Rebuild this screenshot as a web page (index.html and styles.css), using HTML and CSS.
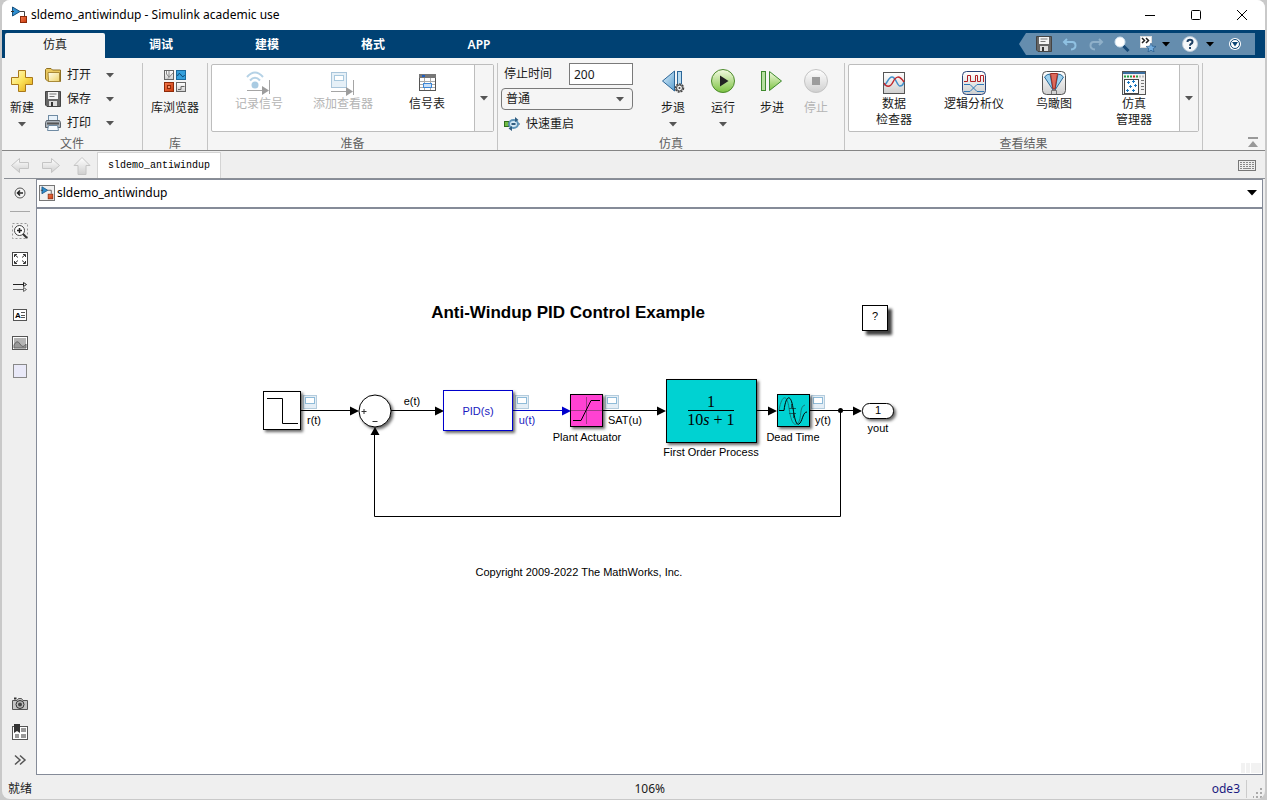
FILE: index.html
```html
<!DOCTYPE html>
<html lang="zh-CN">
<head>
<meta charset="utf-8">
<title>sldemo_antiwindup - Simulink academic use</title>
<link rel="stylesheet" href="styles.css">
</head>
<body>
<svg class="defs" aria-hidden="true">
  <defs>
    <linearGradient id="gold" x1="0" y1="0" x2="1" y2="1"><stop offset="0" stop-color="#fffbd0"/><stop offset=".5" stop-color="#fbe25a"/><stop offset="1" stop-color="#e0a010"/></linearGradient>
    <linearGradient id="folder" x1="0" y1="0" x2="1" y2="1"><stop offset="0" stop-color="#fffef0"/><stop offset="1" stop-color="#eed36a"/></linearGradient>
    <linearGradient id="blue" x1="0" y1="0" x2="1" y2="1"><stop offset="0" stop-color="#dff1fc"/><stop offset="1" stop-color="#5a9fd0"/></linearGradient>
    <linearGradient id="green" x1="0" y1="0" x2="0" y2="1"><stop offset="0" stop-color="#f4fbe2"/><stop offset="1" stop-color="#7cc242"/></linearGradient>
    <linearGradient id="grey" x1="0" y1="0" x2="0" y2="1"><stop offset="0" stop-color="#ffffff"/><stop offset="1" stop-color="#cfcfcf"/></linearGradient>
    <linearGradient id="red" x1="0" y1="0" x2="1" y2="1"><stop offset="0" stop-color="#f47a50"/><stop offset="1" stop-color="#c8380a"/></linearGradient>
    <symbol id="model" viewBox="0 0 18 18"><path d="M10 5.500H14.500V10" fill="none" stroke="#444"/><path d="M2.500 1L10 5.500L2.500 10Z" fill="#2f8fd0" stroke="#16507e"/><path d="M1 5.500H4" stroke="#333"/><rect x="10.500" y="10.500" width="6" height="6" fill="url(#red)" stroke="#8c2a08"/></symbol>
    <symbol id="down" viewBox="0 0 8 5"><path d="M0 0H8L4 4.500Z" fill="currentColor"/></symbol>
    <symbol id="disk" viewBox="0 0 16 16"><path d="M.5 .5H15.500V15.500H2L.5 14Z" fill="#666" stroke="#444"/><rect x="3" y="1" width="10" height="7" fill="#f4f4f4"/><path d="M4.500 3H11.500M4.500 5.500H9.500" stroke="#777"/><rect x="4" y="10" width="8" height="5" fill="#ddd"/><rect x="6" y="11" width="2" height="4" fill="#333"/></symbol>
  </defs>
</svg>
<div class="window">
  <header class="titlebar">
    <svg class="i18" aria-hidden="true"><use href="#model"/></svg>
    <h1 class="title">sldemo_antiwindup - Simulink academic use</h1>
    <button class="winbtn" aria-label="最小化"><svg width="12" height="12"><path d="M1 6.500H11" stroke="#000"/></svg></button>
    <button class="winbtn" aria-label="最大化"><svg width="12" height="12"><rect x="1.500" y="1.500" width="9" height="9" rx="1" fill="none" stroke="#000"/></svg></button>
    <button class="winbtn" aria-label="关闭"><svg width="12" height="12"><path d="M1 1L11 11M11 1L1 11" stroke="#000"/></svg></button>
  </header>

  <nav class="tabs">
    <button class="tab active">仿真</button>
    <button class="tab">调试</button>
    <button class="tab">建模</button>
    <button class="tab">格式</button>
    <button class="tab">APP</button>
    <div class="quick">
      <button class="q" aria-label="保存"><svg class="i16"><use href="#disk"/></svg></button>
      <button class="q" aria-label="撤销"><svg class="i16"><path d="M5 3L2 6L5 9M2.500 6H10.500Q13.500 6 13.500 9.500Q13.500 13 9 13.500" fill="none" stroke="#8fc1e2" stroke-width="2"/></svg></button>
      <button class="q" aria-label="重做"><svg class="i16"><path d="M11 3L14 6L11 9M13.500 6H5.500Q2.500 6 2.500 9.500Q2.500 13 7 13.500" fill="none" stroke="#8fb0c9" stroke-width="2"/></svg></button>
      <button class="q" aria-label="搜索"><svg class="i16"><path d="M9 9.500L14.500 15" stroke="#174a78" stroke-width="3"/><circle cx="6" cy="6" r="5" fill="#fff" stroke="#cfe2f0"/></svg></button>
      <button class="q" aria-label="收藏夹"><svg class="i16"><rect x=".5" y=".5" width="11" height="11" fill="#fff" stroke="#ddd"/><path d="M2 2L4.500 4.500L2 7M6 2L8.500 4.500L6 7" fill="none" stroke="#222" stroke-width="1.500"/><path d="M11 7L12.300 10.200L16 10.500L13.200 12.600L14 16L11 14.200L8 16L8.800 12.600L6 10.500L9.700 10.200Z" fill="#74aee0" stroke="#1d4f80" stroke-width=".6"/></svg></button>
      <button class="qa" aria-label="收藏夹菜单"><svg class="dn"><use href="#down"/></svg></button>
      <button class="q qh" aria-label="帮助"><svg class="i16" viewBox="0 0 16 16"><circle cx="8" cy="8" r="7.500" fill="#f4f7fa" stroke="#b9c8d6"/><path d="M5.500 6Q5.500 3.800 8 3.800Q10.500 3.800 10.500 6Q10.500 7.200 8.800 8Q8 8.500 8 9.700M8 11V13" fill="none" stroke="#1d3f63" stroke-width="2"/></svg></button>
      <button class="qa" aria-label="帮助菜单"><svg class="dn"><use href="#down"/></svg></button>
      <button class="q ql" aria-label="工具栏选项"><svg class="i16"><circle cx="8" cy="8" r="6" fill="#fff"/><circle cx="8" cy="8" r="4.500" fill="#fff" stroke="#0d4675"/><path d="M5 6H11L8 10.500Z" fill="#0d4675"/></svg></button>
    </div>
  </nav>

  <section class="ribbon">
    <div class="group g-file">
      <div class="body">
        <button class="big w40"><svg class="i26"><path d="M9.500 2.500H16.500V9.500H23.500V16.500H16.500V23.500H9.500V16.500H2.500V9.500H9.500Z" fill="url(#gold)" stroke="#a9781a"/></svg><span>新建</span><svg class="dn"><use href="#down"/></svg></button>
        <div class="rows">
          <div class="row"><button class="small"><svg class="i16"><path d="M.5 2.500L1.500 1.500H6L7.500 3H15.500V14.500H3L.5 12Z" fill="#e9c860" stroke="#8e6f22"/><path d="M3 5.500H14.500V14.500H3.500Z" fill="url(#folder)" stroke="#a98a38"/></svg>打开</button><button class="drop" aria-label="打开菜单"><svg class="dn"><use href="#down"/></svg></button></div>
          <div class="row"><button class="small"><svg class="i16"><use href="#disk"/></svg>保存</button><button class="drop" aria-label="保存菜单"><svg class="dn"><use href="#down"/></svg></button></div>
          <div class="row"><button class="small"><svg class="i16"><rect x="3.500" y=".5" width="9" height="6" fill="#e8f2fa" stroke="#6f8ba3"/><path d="M1.500 5.500H14.500L15.500 7.500V12.500H.5V7.500Z" fill="#aab2ba" stroke="#5b636b"/><path d="M2 8.500H14" stroke="#555" stroke-width="2"/><path d="M3.500 10.500H12.500L13.500 15.500H2.500Z" fill="#f6fbff" stroke="#6f8ba3"/></svg>打印</button><button class="drop" aria-label="打印菜单"><svg class="dn"><use href="#down"/></svg></button></div>
        </div>
      </div>
      <div class="glabel">文件</div>
    </div>

    <div class="group g-lib">
      <div class="body mid">
        <button class="big"><svg class="i26"><rect x="2.500" y="2.500" width="9" height="9" fill="url(#grey)" stroke="#666"/><path d="M4.500 3V6L7 9V3M6 10.500L11 5" stroke="#888" fill="none"/><rect x="14.500" y="2.500" width="9" height="9" fill="#35a0dc" stroke="#1a6a9e"/><path d="M15.500 8Q17 3.500 19 7T22.500 7" fill="none" stroke="#0d4a75"/><rect x="2.500" y="14.500" width="9" height="9" fill="url(#red)" stroke="#8e2a08"/><rect x="5.500" y="17.500" width="3" height="3" fill="#f39470" stroke="#8e2a08"/><rect x="14.500" y="14.500" width="9" height="9" fill="url(#grey)" stroke="#666"/><path d="M16 21.500H19V18.500H22.500" fill="none" stroke="#666"/></svg><span>库浏览器</span></button>
      </div>
      <div class="glabel">库</div>
    </div>

    <div class="group g-prep">
      <div class="body">
        <div class="gallery">
          <button class="item w84" disabled><svg class="i26"><g fill="none" stroke="#b5d2e6" stroke-width="2"><path d="M1 7Q9-2 17 7M4 10.500Q9 5 14 10.500"/></g><circle cx="9" cy="15" r="3.500" fill="#a9cbe2"/><path d="M1 20.500H18M23.500 10V24" stroke="#a5a5a5"/><path d="M16 16L23 20.500L16 25Z" fill="#9d9d9d"/></svg><span>记录信号</span></button>
          <button class="item w84" disabled><svg class="i26"><rect x="1.500" y="2.500" width="15" height="15" fill="#e6f0f7" stroke="#a9c5da"/><rect x="4.500" y="5.500" width="9" height="5" fill="#fff" stroke="#a9c9de"/><path d="M1 21.500H18M23.500 10V25" stroke="#a5a5a5"/><path d="M16 17L23 21.500L16 26Z" fill="#9d9d9d"/></svg><span>添加查看器</span></button>
          <button class="item w84"><svg class="i26"><rect x="5.500" y="4.500" width="16" height="16" fill="#fff" stroke="#555"/><rect x="5" y="4" width="17" height="4" fill="#777"/><rect x="8" y="5" width="3" height="2" fill="#1e5fc0"/><path d="M6 11.500H21M6 14.500H21M6 17.500H21M10.500 8V20M16.500 8V20" stroke="#aaa"/><rect x="9.500" y="13.500" width="8" height="4" fill="#c9e0f8" stroke="#3c87d8"/></svg><span>信号表</span></button>
          <button class="more" aria-label="更多准备工具"><svg class="dn"><use href="#down"/></svg></button>
        </div>
      </div>
      <div class="glabel">准备</div>
    </div>

    <div class="group g-sim">
      <div class="body">
        <div class="simcol">
          <div class="stoprow"><label for="stop">停止时间</label><input id="stop" type="text" value="200"></div>
          <div class="selwrap"><select aria-label="仿真模式"><option>普通</option></select><svg class="dn"><use href="#down"/></svg></div>
          <button class="small fast"><svg class="i16"><rect x=".5" y="5.500" width="4" height="5" fill="#72bb45" stroke="#2f6e1d"/><path d="M13 8H16" stroke="#357"/><ellipse cx="9.500" cy="8" rx="4.500" ry="4" fill="#d5e8f4" stroke="#5d93b8" stroke-width="2"/><path d="M11 1L14.500 4L11 6ZM8 10L4.500 12.500L8 15Z" fill="#315d80"/><path d="M7.500 8H11.500" stroke="#315d80" stroke-width="2"/></svg>快速重启</button>
        </div>
        <div class="runs">
          <button class="big w50"><svg class="i26"><path d="M2.500 13L14.500 3V23Z" fill="url(#blue)" stroke="#2c6698"/><rect x="17.500" y="3.500" width="4" height="17" fill="#b9dcf1" stroke="#2c6698"/><circle cx="19.500" cy="20" r="4" fill="#ddd" stroke="#444" stroke-width="1.500" stroke-dasharray="2 1"/><circle cx="19.500" cy="20" r="3" fill="#eee" stroke="#444"/><circle cx="19.500" cy="20" r="1" fill="#444"/></svg><span>步退</span><svg class="dn"><use href="#down"/></svg></button>
          <button class="big w50"><svg class="i26"><circle cx="13" cy="13" r="11.500" fill="url(#green)" stroke="#4c8a2c"/><path d="M10 7.500L18.500 13L10 18.500Z" fill="#222"/></svg><span>运行</span><svg class="dn"><use href="#down"/></svg></button>
          <button class="big w48"><svg class="i26"><rect x="2.500" y="3.500" width="4" height="19" fill="#b5dfa0" stroke="#3e8a2e"/><path d="M10.500 3.500V22.500L22.500 13Z" fill="url(#green)" stroke="#3e8a2e"/></svg><span>步进</span></button>
          <button class="big w40" disabled><svg class="i26"><circle cx="13" cy="13" r="11.500" fill="url(#grey)" stroke="#c4c4c4"/><rect x="9" y="9" width="8" height="8" fill="#9c9c9c"/></svg><span>停止</span></button>
        </div>
      </div>
      <div class="glabel">仿真</div>
    </div>

    <div class="group g-rev">
      <div class="body">
        <div class="gallery">
          <button class="item w80"><svg class="i26"><rect x="2.500" y="2.500" width="21" height="21" fill="url(#grey)" stroke="#555"/><path d="M3 15C6 15 7 7 11 7S16 16 19 16S22 14 23 12" fill="none" stroke="#3f8fca" stroke-width="1.500"/><path d="M3 13C5 17 9 18 12 12S18 5 23 12" fill="none" stroke="#c1272d" stroke-width="1.500"/></svg><span>数据<br>检查器</span></button>
          <button class="item w80"><svg class="i26"><rect x="1.500" y="1.500" width="23" height="23" rx="4" fill="url(#grey)" stroke="#2a4478"/><path d="M3 11.500H6.500V5.500H9.500V11.500H14.500V5.500H16.500V11.500H19.500V5.500H22.500V12" fill="none" stroke="#b01e24"/><path d="M3 14.500H9L16 21.500H23M3 21.500H9L16 14.500H23" fill="none" stroke="#2d78b8"/></svg><span>逻辑分析仪</span></button>
          <button class="item w80"><svg class="i26"><rect x="1.500" y="1.500" width="23" height="23" rx="4" fill="url(#grey)" stroke="#555"/><path d="M3.500 7Q6 4 9 4L12 20Z" fill="#9fd2f0" stroke="#2a6a98"/><path d="M22.500 7Q20 4 17 4L14 20Z" fill="#9fd2f0" stroke="#2a6a98"/><path d="M9.500 3.500H16.500L14 19H12Z" fill="#dd6a5c" stroke="#9c2a22"/><path d="M10.500 24V20.500H15.500V24" fill="none" stroke="#777"/></svg><span>鸟瞰图</span></button>
          <button class="item w80"><svg class="i26"><rect x="1.500" y="1.500" width="23" height="23" fill="#f2f2f2" stroke="#555"/><rect x="2" y="2" width="22" height="2" fill="#3a6fa0"/><path d="M3 6.500H12M15 6.500H18" stroke="#22a040" stroke-width="2" stroke-dasharray="2 1"/><path d="M12 6.500H14" stroke="#d02020" stroke-width="2"/><path d="M18 6.500H23" stroke="#bbb" stroke-width="2" stroke-dasharray="2 1"/><rect x="3.500" y="9.500" width="14" height="14" fill="#fff" stroke="#444"/><path d="M7.500 11V14M6 12.500H9M12.500 10V13M11 11.500H14M9.500 15V18M8 16.500H11M14.500 14V17M13 15.500H16M6.500 19V22M5 20.500H8M12.500 19V22M11 20.500H14" stroke="#1c78c0"/><path d="M20 10.500H23M20 13.500H23M20 16.500H23M20 19.500H23" stroke="#777"/></svg><span>仿真<br>管理器</span></button>
          <button class="more" aria-label="更多结果工具"><svg class="dn"><use href="#down"/></svg></button>
        </div>
      </div>
      <div class="glabel">查看结果</div>
    </div>
    <button class="collapse" aria-label="折叠工具栏"><svg width="12" height="12"><path d="M1 2H11" stroke="#999" stroke-width="2"/><path d="M6 5L11 11H1Z" fill="#999"/></svg></button>
  </section>

  <div class="docbar">
    <button class="nav" aria-label="后退"><svg width="20" height="18"><path d="M1.500 8.500L9.500 1.500V5.500H18.500V11.500H9.500V15.500Z" fill="url(#grey)" stroke="#c4c4c4"/></svg></button>
    <button class="nav" aria-label="前进"><svg width="20" height="18"><path d="M18.500 8.500L10.500 1.500V5.500H1.500V11.500H10.500V15.500Z" fill="url(#grey)" stroke="#c4c4c4"/></svg></button>
    <button class="nav" aria-label="向上"><svg width="20" height="18"><path d="M10 .5L18 8.500H14V17.500H6V8.500H2Z" fill="url(#grey)" stroke="#c4c4c4"/></svg></button>
    <button class="doctab">sldemo_antiwindup</button>
    <button class="kbd" aria-label="键盘"><svg width="18" height="11"><rect x=".5" y=".5" width="17" height="10" fill="#eee" stroke="#777"/><path d="M2 2.500H16M2 4.500H16M2 6.500H16" stroke="#888" stroke-dasharray="2 1"/><path d="M2 8.500H4M5 8.500H13M14 8.500H16" stroke="#888"/></svg></button>
  </div>

  <div class="work">
    <aside class="rail">
      <button class="tool" aria-label="隐藏浏览器"><svg class="i16"><circle cx="8" cy="8" r="5" fill="#f4f4f4" stroke="#555"/><path d="M11 8H6M8 5.500L5.500 8L8 10.500" fill="none" stroke="#222" stroke-width="1.500"/></svg></button>
      <hr class="sep">
      <button class="tool" aria-label="缩放"><svg class="i16"><rect x=".5" y=".5" width="15" height="15" fill="none" stroke="#999" stroke-dasharray="2 2"/><path d="M11 11L15 15" stroke="#333" stroke-width="2"/><circle cx="7.500" cy="7.500" r="5" fill="#fff" stroke="#444"/><path d="M5 7.500H10M7.500 5V10" stroke="#222" stroke-width="1.500"/></svg></button>
      <button class="tool" aria-label="适应视图"><svg class="i16"><rect x=".5" y="1.500" width="15" height="13" fill="#fff" stroke="#444"/><path d="M2.500 6V3.500H5M3 4L6 6.500M11 3.500H13.500V6M13 4L10 6.500M2.500 10V12.500H5M3 12L6 9.500M11 12.500H13.500V10M13 12L10 9.500" fill="none" stroke="#333"/></svg></button>
      <button class="tool" aria-label="采样时间"><svg class="i16"><path d="M1 5.500H12M11.500 3.500L14.500 5.500L11.500 7.500Z" fill="none" stroke="#222"/><path d="M1 10.500H12M11.500 8.500L14.500 10.500L11.500 12.500Z" fill="none" stroke="#666"/></svg></button>
      <button class="tool" aria-label="注释"><svg class="i16" viewBox="0 0 16 16"><rect x="1.500" y="2.500" width="13" height="11" fill="#fff" stroke="#555"/><text class="a" x="3" y="11">A</text><path d="M9 5.500H13M9 8.500H13M9 10.500H13" stroke="#555"/></svg></button>
      <button class="tool" aria-label="图像"><svg class="i16"><rect x=".5" y="1.500" width="15" height="13" fill="#fff" stroke="#555"/><rect x="2" y="3" width="12" height="10" fill="#b4b4b4"/><path d="M2 10Q5 4 8 9T14 9V13H2Z" fill="#999" stroke="#666"/></svg></button>
      <button class="tool" aria-label="区域"><svg class="i16"><rect x="1.500" y="1.500" width="13" height="13" fill="#e9e9f8" stroke="#888"/></svg></button>
      <button class="tool bottom" aria-label="截图"><svg class="i16"><path d="M.5 4.500H5L6.500 2.500H9.500L11 4.500H15.500V13.500H.5Z" fill="#c6c6c6" stroke="#555"/><path d="M2 2.500H4.500" stroke="#333" stroke-width="2"/><circle cx="8" cy="8.500" r="4" fill="#bbb" stroke="#333"/><circle cx="8" cy="8.500" r="2" fill="#444"/></svg></button>
      <button class="tool" aria-label="书签"><svg class="i16"><rect x=".5" y="2.500" width="15" height="13" fill="#fff" stroke="#555"/><path d="M2 0H8V9L5 7L2 9Z" fill="#333"/><path d="M9 4H14V8H9ZM9 10H14V14H9ZM3 10H7V14H3Z" fill="#999"/></svg></button>
      <button class="tool" aria-label="更多"><svg class="i16"><path d="M3 3.500L8 8L3 12.500M8 3.500L13 8L8 12.500" fill="none" stroke="#555" stroke-width="1.500"/></svg></button>
    </aside>
    <main class="editor">
      <div class="pathbar">
        <span class="pathicon"><svg width="14" height="14" aria-hidden="true"><use href="#model"/></svg></span>
        <a class="pathlink" href="#">sldemo_antiwindup</a>
        <button class="pathdrop" aria-label="路径历史"><svg width="10" height="6"><path d="M0 0H10L5 5.500Z" fill="#000"/></svg></button>
      </div>
      <div class="canvas">
        <svg class="diagram" width="640" height="290" viewBox="260 295 640 290" role="img" aria-label="Anti-Windup PID Control Example">
          <defs>
            <filter id="sh" x="-20%" y="-20%" width="150%" height="160%"><feDropShadow dx="2" dy="2" stdDeviation="1.500" flood-color="#000" flood-opacity=".6"/></filter>
            <filter id="sh2" x="-20%" y="-20%" width="160%" height="160%"><feDropShadow dx="4" dy="4" stdDeviation="1.500" flood-color="#000" flood-opacity=".75"/></filter>
            <g id="scope"><rect x=".5" y=".5" width="13" height="13" fill="#e4eef6" stroke="#b4ccdd"/><rect x="2.500" y="2.500" width="9" height="6" fill="#fff" stroke="#8fbbd8"/></g>
            <path id="head" d="M0-4.500L9 0L0 4.500Z"/>
          </defs>
          <text class="heading" x="568" y="318">Anti-Windup PID Control Example</text>
          <rect x="862.500" y="305.500" width="25" height="25" fill="#fff" stroke="#000" filter="url(#sh2)"/>
          <text class="mid" x="875" y="320">?</text>

          <g fill="none" stroke="#000">
            <path d="M301 410.500H352M391 410.500H437M603 410.500H660M756 410.500H771M809 410.500H855"/>
            <path d="M840.500 410V516.500H374.500V433"/>
            <path d="M513 410.500H564" stroke="#00c"/>
          </g>
          <use href="#head" x="350" y="411"/><use href="#head" x="435" y="411"/><use href="#head" x="657" y="411"/><use href="#head" x="768" y="411"/><use href="#head" x="853" y="411"/>
          <use href="#head" x="562" y="411" fill="#00c"/>
          <path d="M370.500 435L375 427L379.500 435Z"/>
          <circle cx="840.500" cy="410.500" r="2.500"/>

          <use href="#scope" x="303" y="395"/><use href="#scope" x="515" y="395"/><use href="#scope" x="605" y="395"/><use href="#scope" x="811" y="395"/>
          <rect x="263.500" y="391.500" width="37" height="38" fill="#fff" stroke="#000" filter="url(#sh)"/>
          <path d="M267 398.500H282.500V423.500H298" fill="none" stroke="#000"/>
          <circle cx="375" cy="411" r="16" fill="#fff" stroke="#000" filter="url(#sh)"/>
          <path d="M361.500 411.500H366.500M364 409V414M372.500 421.500H377.500" stroke="#333"/>
          <rect x="443.500" y="390.500" width="69" height="40" fill="#fff" stroke="#00c" filter="url(#sh)"/>
          <text class="mid blue" x="478" y="415">PID(s)</text>
          <rect x="570.500" y="394.500" width="32" height="32" fill="#ff42d2" stroke="#000" filter="url(#sh)"/>
          <path d="M586.500 397V424M571 410.500H602" stroke="#a03a88"/>
          <path d="M573 420.500H581L591 400.500H600" fill="none" stroke="#000"/>
          <rect x="666.500" y="379.500" width="90" height="63" fill="#00d2d2" stroke="#000" filter="url(#sh)"/>
          <text class="math" x="711" y="407">1</text>
          <path d="M688 410.500H734" stroke="#000"/>
          <text class="math" x="711" y="425">10<tspan class="it">s</tspan> + 1</text>
          <rect x="777.500" y="394.500" width="32" height="32" fill="#00d2d2" stroke="#000" filter="url(#sh)"/>
          <path d="M779 410C782 394 787 394 789 408S794 427 798 423S799 406 805 405" fill="none" stroke="#157c7c"/>
          <path d="M789 408.500H796M789 413.500H796M791.500 404V408M793.500 414V418" fill="none" stroke="#0c6060"/>
          <path d="M779 410.500H784C786 394 791 394 793 408S797 427 800 423S803 412 807 412" fill="none" stroke="#000"/>
          <rect x="862.500" y="403.500" width="31" height="15" rx="7" fill="#fff" stroke="#000" filter="url(#sh)"/>
          <text class="mid" x="878" y="414">1</text>

          <text class="mid" x="314" y="424">r(t)</text>
          <text class="mid" x="412" y="405">e(t)</text>
          <text class="mid blue" x="527" y="424">u(t)</text>
          <text class="mid" x="625" y="424">SAT(u)</text>
          <text class="mid" x="587" y="441">Plant Actuator</text>
          <text class="mid" x="711" y="456">First Order Process</text>
          <text class="mid" x="793" y="441">Dead Time</text>
          <text class="mid" x="823" y="424">y(t)</text>
          <text class="mid" x="878" y="432">yout</text>
          <text class="mid" x="579" y="576">Copyright 2009-2022 The MathWorks, Inc.</text>
        </svg>
        <svg class="marks" width="20" height="10" aria-hidden="true"><path d="M0 0H4V10H0ZM5 0H9V10H5ZM10 0H20V10H10Z" fill="#f2f2f2"/></svg>
      </div>
    </main>
  </div>

  <footer class="status">
    <span>就绪</span>
    <div class="right">
      <span>106%</span>
      <a class="solver" href="#">ode3</a>
      <svg class="grip" width="10" height="10" aria-hidden="true"><path d="M7 0H9V2H7ZM7 4H9V6H7ZM3 4H5V6H3ZM7 8H9V10H7ZM3 8H5V10H3ZM0 8H1V10H0Z" fill="#aaa"/></svg>
    </div>
  </footer>
</div>
</body>
</html>
```
FILE: styles.css
```css
* { box-sizing: border-box; }
body {
  margin: 0;
  background: #c9c9c9;
  color: #1a1a1a;
  font: 12px/16px "Noto Sans", "Noto Sans CJK SC", sans-serif;
}
button {
  margin: 0; padding: 0; border: 0; background: none;
  font: inherit; color: inherit;
}
button:disabled { color: #b4b4b4; }
svg { display: block; flex: none; }
a { color: inherit; text-decoration: none; }
.defs { position: absolute; width: 0; height: 0; }
.i16 { width: 16px; height: 16px; }
.i18 { width: 18px; height: 18px; }
.i26 { width: 26px; height: 26px; }
.dn { width: 8px; height: 5px; color: #555; }

.window {
  display: flex; flex-direction: column;
  height: calc(100vh - 1px);
  margin: 0 2px;
  background: #efefef;
  border-radius: 8px;
  overflow: hidden;
}

.titlebar { display: flex; align-items: center; height: 30px; padding-left: 8px; background: #fff; flex: none; }
.title { flex: 1; margin: 0 0 0 3px; font-size: 12px; font-weight: 400; color: #000; }
.winbtn { display: flex; justify-content: center; align-items: center; width: 46px; height: 30px; }

.tabs { display: flex; gap: 6px; height: 28px; padding: 3px 10px 0 3px; background: #004173; flex: none; }
.tab { width: 100px; height: 25px; padding-bottom: 2px; color: #fff; font-weight: 600; }
.tab.active { background: #f5f5f5; color: #1a1a1a; font-weight: 400; border-radius: 2px 2px 0 0; }
.quick {
  display: flex; align-items: center; height: 22px;
  margin-left: auto; padding: 0 7px 0 12px;
  background: #658dae;
  clip-path: polygon(0 50%, 7px 0, 100% 0, 100% 100%, 7px 100%);
}
.q { display: flex; justify-content: center; width: 26px; }
.qa { display: flex; justify-content: center; width: 10px; }
.qa .dn { color: #000; }
.qh { margin: 0 2px 0 6px; }
.ql { margin-left: 7px; }

.ribbon { display: flex; height: 93px; padding-top: 5px; background: #f5f5f5; border-bottom: 1px solid #858585; flex: none; }
.group { display: flex; flex-direction: column; border-right: 1px solid #c4c4c4; flex: none; }
.g-file { width: 141px; }
.g-lib { width: 65px; }
.g-prep { width: 290px; }
.g-sim { width: 347px; }
.g-rev { width: 358px; }
.body { display: flex; height: 72px; }
.body.mid { justify-content: center; }
.glabel { height: 15px; line-height: 17px; text-align: center; color: #606060; }
.big { display: flex; flex-direction: column; align-items: center; padding-top: 5px; }
.big span { margin: 6px 0; white-space: nowrap; }
.w40 { width: 40px; }
.w48 { width: 48px; }
.w50 { width: 50px; }
.w80 { width: 80px; }
.w84 { width: 84px; }
.row { display: flex; height: 24px; padding-left: 3px; }
.small { display: flex; align-items: center; gap: 6px; }
.drop { display: flex; justify-content: center; align-items: center; width: 38px; }
.gallery { display: flex; height: 68px; margin: 1px 0 0 3px; padding-left: 5px; background: #fff; border: 1px solid #bdbdbd; border-radius: 2px; }
.item { display: flex; flex-direction: column; align-items: center; padding-top: 5px; }
.more { display: flex; justify-content: center; align-items: center; width: 19px; margin-left: 5px; background: #f5f5f5; border-left: 1px solid #bdbdbd; }

.simcol { display: flex; flex-direction: column; gap: 3px; width: 135px; padding-left: 3px; }
.stoprow { display: flex; align-items: center; justify-content: space-between; height: 22px; padding-left: 3px; }
.stoprow input { width: 64px; height: 22px; padding: 0 4px; border: 1px solid #7a7a7a; background: #fff; font: inherit; color: #1a1a1a; }
.selwrap { display: grid; align-items: center; }
.selwrap > * { grid-area: 1 / 1; }
.selwrap select { width: 100%; height: 22px; padding: 0 4px; appearance: none; border: 1px solid #7a7a7a; border-radius: 4px; background: #f5f5f5; font: inherit; color: #1a1a1a; }
.selwrap .dn { justify-self: end; margin-right: 9px; pointer-events: none; }
.fast { height: 22px; padding-left: 3px; }
.runs { display: flex; margin-left: 15px; }
.collapse { align-self: flex-end; margin: 0 6px 2px auto; }

.docbar { display: flex; align-items: center; height: 28px; margin-left: 2px; padding-top: 2px; border-bottom: 1px solid #8b8f96; flex: none; }
.nav { display: flex; justify-content: center; width: 31px; }
.doctab { height: 26px; align-self: flex-end; width: 124px; background: #fff; border: 1px solid #d4d4d4; border-bottom: 0; font: 10px/16px "Liberation Mono", monospace; color: #000; }
.kbd { margin-left: auto; margin-right: 9px; }

.work { display: flex; flex: 1; min-height: 0; }
.rail { display: flex; flex-direction: column; width: 34px; padding-bottom: 1px; flex: none; }
.tool { display: flex; justify-content: center; align-items: center; height: 28px; padding-left: 2px; }
.tool .a { font: bold 8px "Liberation Sans", sans-serif; }
.sep { width: 20px; height: 1px; margin: 4px 0 5px 8px; border: 0; background: #a8a8a8; }
.bottom { margin-top: auto; }
.editor { display: flex; flex-direction: column; flex: 1; min-width: 0; margin-right: 2px; border: 1px solid #858b98; }
.pathbar { display: flex; align-items: center; height: 29px; padding: 0 5px 2px 2px; background: #fff; border-bottom: 2px solid #858b98; flex: none; }
.pathicon { display: flex; border: 1px solid #777; background: #f0f0f0; }
.pathlink { margin-left: 2px; color: #000; }
.pathdrop { margin-left: auto; }
.canvas { display: flex; flex-direction: column; flex: 1; min-height: 0; padding: 86px 1px 1px 223px; background: #fff; overflow: hidden; }
.marks { margin: auto 0 0 auto; }
.diagram text { font: 11px "Liberation Sans", sans-serif; }
.diagram .mid { text-anchor: middle; }
.diagram .heading { font-size: 17px; font-weight: 700; text-anchor: middle; }
.diagram .math { font: 16px "Liberation Serif", serif; text-anchor: middle; }
.diagram .math .it { font: italic 16px "Liberation Serif", serif; }
.diagram .blue { fill: #1a1ac0; }

.status { display: grid; grid-template-columns: 1fr 1fr; align-items: center; height: 24px; padding: 3px 0 0 2px; flex: none; }
.status > span { padding-left: 4px; }
.right { display: flex; align-items: center; }
.solver { margin-left: auto; padding-right: 6px; border-right: 1px solid #ccc; color: #1a1a80; line-height: 18px; }
.grip { align-self: flex-end; margin: 0 2px 0 6px; }
```
